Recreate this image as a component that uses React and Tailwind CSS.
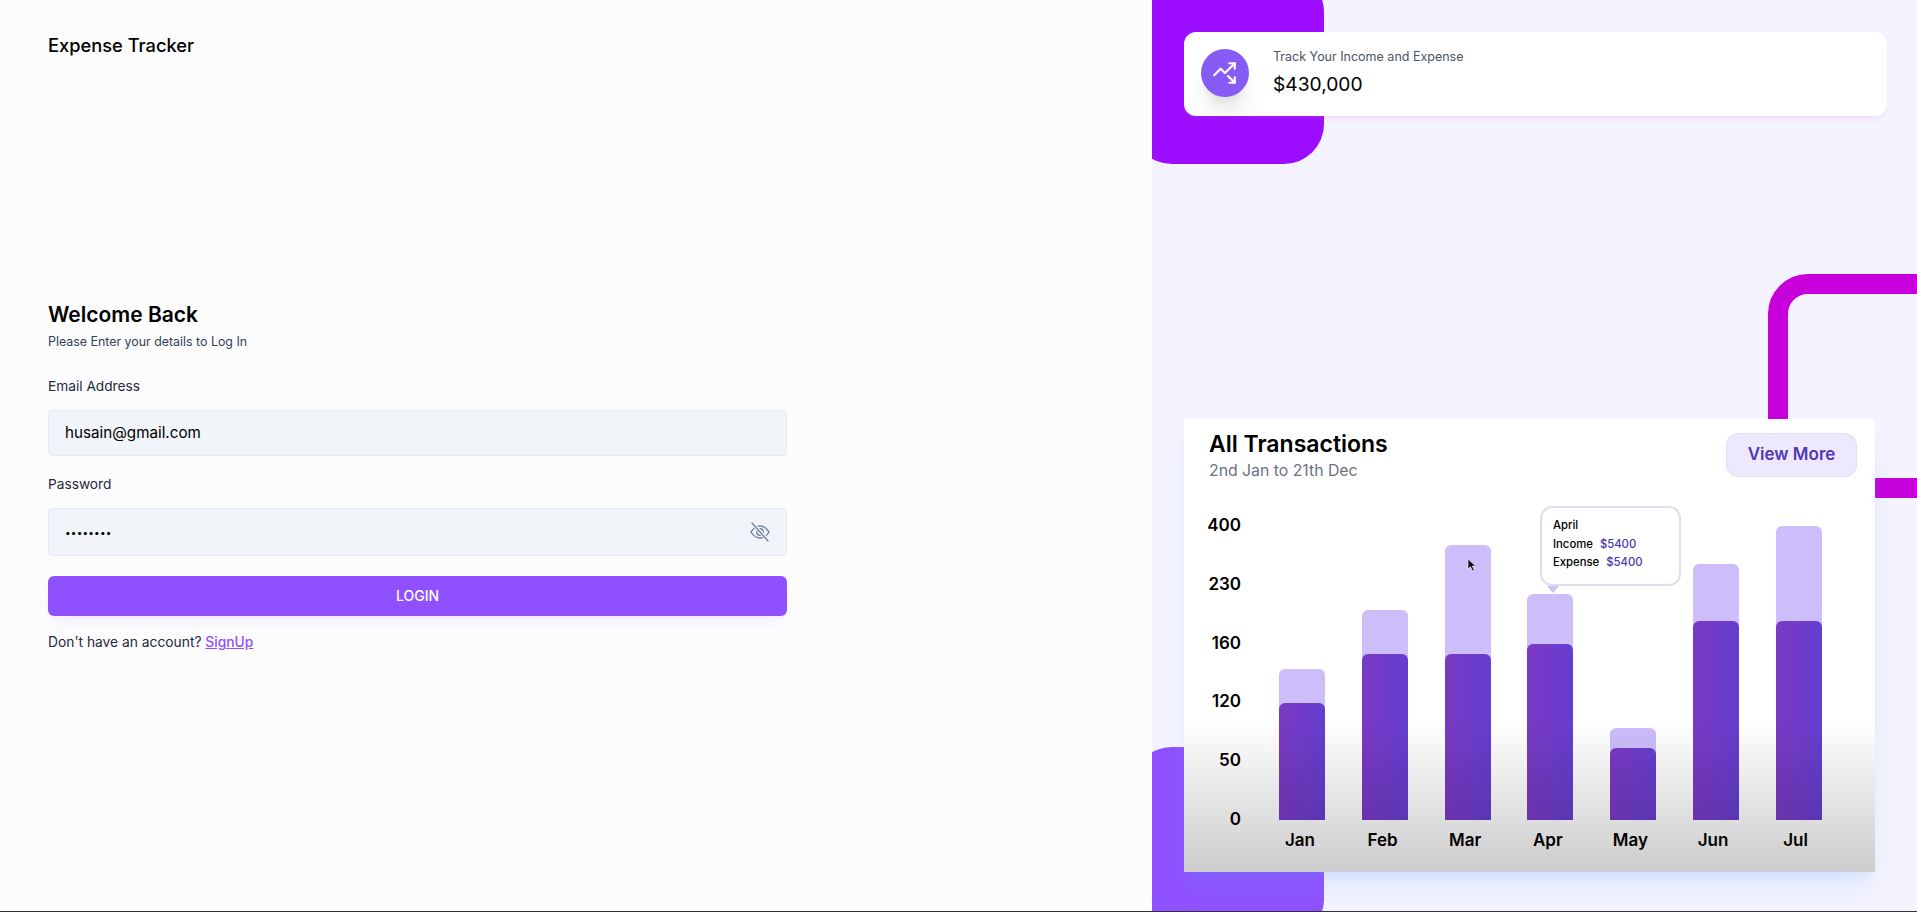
import { TrendingUpDown } from 'lucide-react';

const POPPINS = "font-['Inter','Noto_Sans',sans-serif]";

const MONTHS = [
  { name: 'Jan', light: 151, dark: 117 },
  { name: 'Feb', light: 210, dark: 166 },
  { name: 'Mar', light: 275, dark: 166 },
  { name: 'Apr', light: 226, dark: 176 },
  { name: 'May', light: 92, dark: 72 },
  { name: 'Jun', light: 256, dark: 199 },
  { name: 'Jul', light: 294, dark: 199 },
];

const TICKS = ['400', '230', '160', '120', '50', '0'];

function EyeSlash() {
  return (
    <svg width="22" height="22" viewBox="0 0 22 22" fill="none" stroke="#71829c" strokeWidth="1.4" strokeLinecap="round">
      <path d="M2 11s3.5-6 9-6 9 6 9 6-3.5 6-9 6-9-6-9-6z" />
      <circle cx="11" cy="11" r="3.2" />
      <path d="M3.5 2.5l15.5 17" stroke="#f1f5f9" strokeWidth="3.4" />
      <path d="M3 2l16 18" />
    </svg>
  );
}

function Field({ label, value, isPassword, inputClass }) {
  return (
    <div className="flex flex-col">
      <label className="text-[13.7px] leading-[18px] text-slate-800">{label}</label>
      <div className={`mt-[15px] flex items-center justify-between rounded border border-[#e6ebf3] bg-[#f1f5f9] pl-4 pr-[15px] ${inputClass}`}>
        <span className={isPassword ? 'text-[10px] tracking-[0.2px] text-black' : 'text-[15.2px] text-black'}>{value}</span>
        {isPassword && <EyeSlash />}
      </div>
    </div>
  );
}

function LoginForm() {
  return (
    <div className="flex h-full w-[1152px] flex-col bg-[#fcfcfd] pl-12 pt-[34px]">
      <h2 className="text-[18.3px] leading-[22px] font-medium text-black">Expense Tracker</h2>
      <div className="mt-[245px] w-[739px]">
        <h3 className="text-[21px] leading-7 font-semibold text-black">Welcome Back</h3>
        <p className="mt-[3px] text-[12.4px] leading-5 text-slate-700">Please Enter your details to Log In</p>
        <div className="mt-[25px]">
          <Field label="Email Address" value="husain@gmail.com" inputClass="h-[46px]" />
        </div>
        <div className="mt-[19px]">
          <Field label="Password" value="••••••••" isPassword inputClass="h-[48px]" />
        </div>
        <button className="mt-[20px] h-10 w-full rounded-md bg-[#8f50ff] pb-0.5 text-[14px] font-medium text-white shadow-lg shadow-purple-600/5">
          LOGIN
        </button>
        <p className="mt-4 text-[13.8px] leading-5 text-slate-800">
          Don't have an account? <span className="font-medium text-[#8f50ff] underline">SignUp</span>
        </p>
      </div>
    </div>
  );
}

function StatCard() {
  return (
    <div className="relative flex h-[84px] w-[703px] items-center gap-6 rounded-xl bg-white pb-0.5 pl-[17px] shadow-md shadow-purple-400/10">
      <div className="flex size-12 items-center justify-center rounded-full bg-[#875cf5] text-white shadow-xl">
        <TrendingUpDown size={26} />
      </div>
      <div>
        <p className="text-[12.5px] leading-4 text-gray-600">Track Your Income and Expense</p>
        <p className="mt-[5px] text-[19.2px] leading-7 text-black">$430,000</p>
      </div>
    </div>
  );
}

function ChartTooltip() {
  return (
    <div className="absolute left-[356px] top-[87px] z-10 h-20 w-[141px] rounded-xl border-2 border-[#e0ddf0] bg-white pl-[11px] pt-2 text-[11.3px] leading-[18.5px] font-medium text-black">
      <p>April</p>
      <p>
        Income <span className="ml-1 text-[#4a35b0]">$5400</span>
      </p>
      <p>
        Expense <span className="ml-1 text-[#4a35b0]">$5400</span>
      </p>
      <div className="absolute left-[5px] top-[78px] size-0 border-x-[6px] border-t-[7px] border-x-transparent border-t-[#cfc0fa]" />
    </div>
  );
}

function TransactionsChart() {
  return (
    <div className="relative mt-[303px] h-[453px] w-[691px] overflow-hidden bg-white shadow-xl shadow-blue-400/15">
      <div className="flex items-start justify-between pl-[25px] pr-[18px] pt-[14px]">
        <div>
          <h3 className="mt-px text-[23px] leading-5 font-semibold text-black">All Transactions</h3>
          <p className="mt-[7px] text-[15.8px] leading-5 text-gray-500">2nd Jan to 21th Dec</p>
        </div>
        <button className="h-[44px] w-[131px] rounded-xl border border-[#e0dcf5] bg-[#eee8fc] text-[17px] font-semibold text-[#4f3ab5]">
          View More
        </button>
      </div>

      <div className="absolute left-0 top-[96px] flex w-[57px] flex-col items-end gap-[38.8px] text-[17px] leading-5 font-semibold text-black">
        {TICKS.map((t) => (
          <span key={t}>{t}</span>
        ))}
      </div>

      <div className="absolute left-[95px] top-0 flex h-[401px] items-end gap-[36.8px]">
        {MONTHS.map((m) => (
          <div key={m.name} className="relative w-[46px] rounded-t-md bg-[#cdbdfb]" style={{ height: m.light }}>
            <div
              className="absolute inset-x-0 bottom-0 rounded-t-md bg-linear-to-r from-[#7b39c3] to-[#643ecf]"
              style={{ height: m.dark }}
            />
          </div>
        ))}
      </div>

      <div className="absolute left-[93px] top-[411px] flex gap-[36.6px] text-[17px] leading-5 font-semibold text-black">
        {MONTHS.map((m) => (
          <span key={m.name} className="w-[46px] text-center">
            {m.name}
          </span>
        ))}
      </div>

      <ChartTooltip />

      {/* mouse pointer captured in the recording */}
      <svg className="absolute left-[283px] top-[139px]" width="10" height="14" viewBox="0 0 10 14">
        <path d="M1 1v10l2.5-2.2L5.5 13l1.8-.8-2-4.1H8.6z" fill="#111" stroke="#fff" strokeWidth="0.6" />
      </svg>

      {/* the picture fades to grey towards its lower edge */}
      <div className="pointer-events-none absolute inset-x-0 bottom-0 h-[152px] bg-linear-to-b from-black/0 to-black/20" />
    </div>
  );
}

function StatsPanel() {
  return (
    <div className="relative h-full flex-1 overflow-hidden bg-[#f5f3ff] pl-8 pt-8">
      <div className="absolute -left-5 -top-7 size-48 rounded-[40px] bg-[#9c0cff]" />
      <div className="absolute left-[616px] top-[274px] h-56 w-48 rounded-[40px] border-[20px] border-[#c800dc]" />
      <div className="absolute -bottom-7 -left-5 size-48 rounded-[40px] bg-[#8f50ff]" />
      <StatCard />
      <TransactionsChart />
    </div>
  );
}

export default function App() {
  return (
    <div className={`flex h-[912px] overflow-hidden border-b border-[#333] ${POPPINS}`}>
      <LoginForm />
      <StatsPanel />
    </div>
  );
}
